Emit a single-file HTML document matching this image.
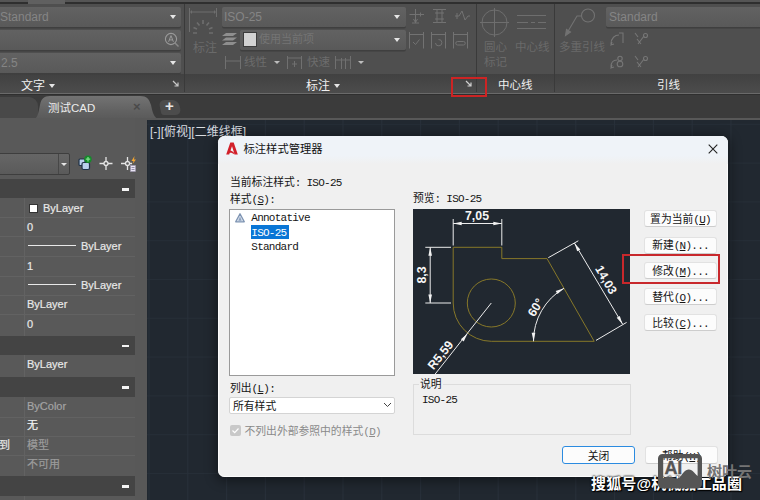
<!DOCTYPE html>
<html lang="zh-CN">
<head>
<meta charset="utf-8">
<title>标注样式管理器</title>
<style>
*{box-sizing:border-box;margin:0;padding:0}
html,body{width:760px;height:500px;overflow:hidden;background:#212830}
body{position:relative;font-family:"Liberation Sans","Noto Sans CJK SC",sans-serif;font-size:11px;color:#ddd}
.a{position:absolute}
.t{position:absolute;white-space:nowrap;line-height:1}
/* ribbon */
#ribbon{left:0;top:0;width:760px;height:96px;background:#4f4f4f}
.combo{background:linear-gradient(#626262,#595959);border-radius:2px;height:20px;box-shadow:0 1.5px 0 #3f3f3f}
.dis{color:#858585}
.wt{color:#f0f0f0}
.vsep{width:1px;background:#3a3a3a;top:4px;height:88px}
.arr{width:0;height:0;border-left:3.5px solid transparent;border-right:3.5px solid transparent;border-top:4px solid #e6e6e6}
/* left palette */
#pal{left:0;top:118px;width:147px;height:382px;background:#595959}
.sec{left:0;width:135px;height:19px;background:#444}
.row{left:0;width:135px;height:1px;background:#626262}
.val{color:#e8e8e8;font-size:11px;-webkit-text-stroke:0.2px currentColor}
/* dialog */
#dlg{left:218px;top:136px;width:510.3px;height:340.8px;background:#f0f0f0;border-radius:6.5px;box-shadow:inset 0 0 0 1px rgba(255,255,255,.8),0 2px 12px 2px rgba(0,0,0,.42);color:#111}
.s{font-family:"Liberation Mono","Noto Sans CJK SC",monospace;font-size:10.8px;color:#151515;font-weight:400}
.m{font-family:"Liberation Mono",monospace;font-size:11px;letter-spacing:-0.75px;font-weight:400}
u{text-decoration-thickness:1px;text-underline-offset:1px}
.btn{background:#fcfcfc;border:1px solid #e2e2e2;border-bottom-color:#cdcdcd;border-radius:3px;height:17px;width:73px;text-align:center}
</style>
</head>
<body>
<div id="ribbon" class="a">
<div class="a" style="left:0;top:0;width:760px;height:2px;background:#555"></div><div class="a" style="left:0;top:2px;width:760px;height:1.5px;background:#2f2f2f"></div><div class="a" style="left:28px;top:0;width:37px;height:4px;background:#606060"></div>
<div class="a" style="left:0;top:74px;width:760px;height:19px;background:linear-gradient(#414141,#4c4c4c)"></div>
<div class="a" style="left:0;top:92.5px;width:760px;height:1px;background:#6a6a6a"></div><div class="a" style="left:0;top:93.5px;width:760px;height:2.5px;background:#2f2f2f"></div>
<!-- text panel -->
<div class="a combo" style="left:-3px;top:7px;width:184px"></div>
<div class="a combo" style="left:-3px;top:30px;width:184px"></div>
<div class="a combo" style="left:-3px;top:53px;width:184px"></div>
<div class="t dis" style="left:0;top:11px;font-size:12px">Standard</div>
<div class="t dis" style="left:1px;top:57px;font-size:12px">2.5</div>
<div class="a arr" style="left:170px;top:15px"></div>
<div class="a arr" style="left:170px;top:61px"></div>
<svg class="a" style="left:163px;top:31px" width="18" height="18" viewBox="0 0 18 18"><circle cx="8" cy="8" r="5.6" fill="none" stroke="#9a9a9a" stroke-width="1.1"/><path d="M5.6 10.8 L8 4.6 L10.4 10.8 M6.4 8.9 H9.6" fill="none" stroke="#9a9a9a" stroke-width="1"/><path d="M12 12 L15.5 15.5" stroke="#8a8a8a" stroke-width="1.4"/></svg>
<div class="t wt" style="left:21px;top:80px;font-size:12px">文字</div>
<div class="a arr" style="left:49px;top:84px"></div>
<svg class="a" style="left:172px;top:80px" width="8" height="8" viewBox="0 0 8 8"><path d="M1 1 L6 6 M6 2.5 V6 H2.5" fill="none" stroke="#c8c8c8" stroke-width="1.2"/></svg>
<div class="a vsep" style="left:184px"></div>
<!-- dimension panel -->
<svg class="a" style="left:188px;top:6px" width="30" height="30" viewBox="0 0 30 30"><g fill="none" stroke="#6e6e6e" stroke-width="1"><path d="M1.5 2 V26 M28.500 2 V11 M1.500 6 H28.500 M3.500 4.500 V7.500 M26.500 4.500 V7.500"/><path d="M15 14 V18 M9 16.500 L11.500 19.500 M21 16.500 L18.500 19.500 M5.500 21.500 L9 23 M24.500 21.500 L21 23 M5 27 H9 M25 27 H21" stroke-width="1.6"/></g></svg>
<div class="t" style="left:193px;top:42px;font-size:12px;color:#6a6a6a">标注</div>
<div class="a combo" style="left:222px;top:7px;width:184px"></div>
<div class="t dis" style="left:224px;top:11px;font-size:12px">ISO-25</div>
<div class="a arr" style="left:394px;top:15px"></div>
<svg class="a" style="left:222px;top:32px" width="16" height="15" viewBox="0 0 16 15"><g fill="#8e8e8e"><path d="M4 1 H15 L11 4 H0 Z"/><path d="M4 5.500 H15 L11 8.500 H0 Z"/><path d="M4 10 H15 L11 13 H0 Z"/></g></svg>
<div class="a combo" style="left:240px;top:30px;width:166px"></div>
<div class="a" style="left:243px;top:32px;width:14px;height:15px;background:#d2d2d2;border:1px solid #3c3c3c"></div>
<div class="t dis" style="left:259px;top:34px;font-size:11px;color:#747474">使用当前项</div>
<div class="a arr" style="left:394px;top:38px"></div>
<svg class="a" style="left:224px;top:55px" width="18" height="15" viewBox="0 0 18 15"><path d="M1.500 1 V14 M16.500 1 V14 M1.500 6 H16.500" fill="none" stroke="#707070" stroke-width="1"/></svg>
<div class="t" style="left:244px;top:57px;font-size:11.5px;color:#6c6c6c">线性</div>
<div class="a arr" style="left:274px;top:61px;border-width:3px 3px 0 3px;border-top-color:#bdbdbd"></div>
<svg class="a" style="left:286px;top:55px" width="17" height="15" viewBox="0 0 17 15"><path d="M1.500 1 V14 M15.500 1 V14 M1.500 3 H15.500 M8.500 6 V12 M6 9 H11" fill="none" stroke="#707070" stroke-width="1"/></svg>
<div class="t" style="left:307px;top:57px;font-size:11.5px;color:#6c6c6c">快速</div>
<svg class="a" style="left:334px;top:55px" width="18" height="15" viewBox="0 0 18 15"><path d="M1.500 1 V14 M7.500 3 V14 M11.500 3 V14 M16.500 1 V14 M1.500 5 H16.500" fill="none" stroke="#707070" stroke-width="1"/></svg>
<div class="a arr" style="left:358px;top:61px;border-width:3px 3px 0 3px;border-top-color:#bdbdbd"></div>
<div class="t wt" style="left:306px;top:80px;font-size:12px">标注</div>
<div class="a arr" style="left:334px;top:84px"></div>
<!-- small dim icons -->
<svg class="a" style="left:409px;top:7px" width="62" height="42" viewBox="0 0 62 42"><g fill="none" stroke="#727272" stroke-width="1">
<path d="M3 16 H10 M6.500 2 V16 M4.500 12 L6.500 15.500 L8.500 12 M0.500 7.500 H15 M11.500 5.500 V9.500"/>
<path d="M24 2.500 H37 M24 15.500 H37 M28 2.500 V15.500 M33 2.500 V15.500 M26 6 H35 M26 12 H35"/>
<path d="M46 9 H50 L53 4 L56 13 L59 9 H61 M48 6 V12"/>
<path d="M0.500 25 V41.500 M14.500 25 V41.500 M0.500 27.500 H14.500 M4 35 L6.500 37.500 L10.500 32.500"/>
<path d="M22.500 25 V41.500 M36.500 25 V41.500 M22.500 27.500 H36.500 M26.500 36 A3.200 3.200 0 1 0 29.500 32.500"/>
<path d="M44.500 25 V41.500 M58.500 25 V41.500 M44.500 27.500 H58.500 M48.500 34.500 H54.500 A1.700 1.700 0 0 1 54.500 38 H48.500 A1.700 1.700 0 0 1 48.500 34.500"/>
</g></svg>
<div class="a" style="left:450.5px;top:76.5px;width:36.5px;height:20.5px;border:2px solid #cc2424;z-index:5"></div>
<svg class="a" style="left:465px;top:80px" width="8" height="8" viewBox="0 0 8 8"><path d="M1 1 L6 6 M6 2.500 V6 H2.500" fill="none" stroke="#d0d0d0" stroke-width="1.2"/></svg>
<div class="a vsep" style="left:476px"></div>
<!-- centerline panel -->
<svg class="a" style="left:480px;top:7px" width="70" height="32" viewBox="0 0 70 32"><g fill="none" stroke="#6e6e6e" stroke-width="1"><circle cx="14.500" cy="15.500" r="12.500"/><path d="M14.500 1 V30 M0 15.500 H29"/><path d="M37 8.500 H66 M37 15.500 H48 M51 15.500 H55 M58 15.500 H66 M37 21.500 H66"/></g></svg>
<div class="t" style="left:484px;top:42px;font-size:11.500px;color:#6a6a6a">圆心</div>
<div class="t" style="left:484px;top:57px;font-size:11.500px;color:#6a6a6a">标记</div>
<div class="t" style="left:515px;top:42px;font-size:11.500px;color:#6a6a6a">中心线</div>
<div class="t wt" style="left:498px;top:80px;font-size:11.500px">中心线</div>
<div class="a vsep" style="left:554px"></div>
<!-- leader panel -->
<svg class="a" style="left:562px;top:6px" width="36" height="32" viewBox="0 0 36 32"><g fill="none" stroke="#727272" stroke-width="1.100"><circle cx="26" cy="9.500" r="6.500"/><path d="M19.500 10 H15 L5 27"/><path d="M3.500 29.500 L4.500 23.500 L8.500 26 Z" fill="#727272"/></g></svg>
<div class="t" style="left:559px;top:42px;font-size:11.500px;color:#6a6a6a">多重引线</div>
<div class="a combo" style="left:606px;top:7px;width:160px"></div>
<div class="t dis" style="left:609px;top:11px;font-size:12px">Standard</div>
<svg class="a" style="left:608px;top:30px" width="42" height="42" viewBox="0 0 42 42"><g fill="none" stroke="#767676" stroke-width="1.100">
<path d="M3 14 C3 8 7 5 11 5 M11 3 H15 V13 M4 12 L3 15 L6 14"/>
<path d="M27 3 L30 7 M30 14 L36 6 M29 9 L33 14"/><circle cx="37.500" cy="5.500" r="2"/>
<path d="M3 37 C3 32 6 30 9 30 M4 35 L3 38 L6 37"/><circle cx="12" cy="28.500" r="2.200"/><circle cx="12" cy="34" r="2.800"/>
<path d="M27 26 L30 30 M30 37 L36 29 M29 32 L33 37"/><circle cx="37.500" cy="28.500" r="2"/>
</g></svg>
<div class="t wt" style="left:657px;top:80px;font-size:11.500px">引线</div>

</div>
<div id="tabs" class="a" style="left:0;top:95px;width:760px;height:25px;background:#3b3b3b">
<div class="a" style="left:-10px;top:2px;width:48px;height:22px;background:#494949;border-radius:0 9px 0 0"></div>
<svg class="a" style="left:30px;top:1px" width="136" height="24" viewBox="0 0 136 24"><defs><linearGradient id="tg" x1="0" y1="0" x2="0" y2="1"><stop offset="0" stop-color="#737373"/><stop offset="0.6" stop-color="#626262"/><stop offset="1" stop-color="#595959"/></linearGradient></defs><path d="M0 24 C8 24 8 18 10 9 C11 3 14 0 20 0 H110 C117 0 119 3 121 9 C123 18 124 24 134 24 Z" fill="url(#tg)"/></svg>
<div class="t" style="left:48px;top:7.5px;font-size:11.5px;color:#ececec">测试CAD</div>
<div class="t" style="left:133px;top:4.5px;font-size:13px;color:#4a4a4a;font-weight:bold">×</div>
<div class="a" style="left:160px;top:5px;width:20px;height:15px;background:#4c4c4c;border-radius:6px 6px 6px 2px;transform:skewX(12deg)"></div>
<div class="t" style="left:165px;top:3px;font-size:15px;color:#e8e8e8;font-weight:bold">+</div>
<div class="a" style="left:0;top:23px;width:760px;height:2px;background:#585858"></div>
</div>
<div id="pal" class="a">
<div class="a" style="left:24px;top:80px;width:1px;height:302px;background:#626262"></div>
<div class="a" style="left:135px;top:0;width:13px;height:382px;background:#585858"></div>
<div class="a" style="left:-2px;top:35px;width:72px;height:22px;background:linear-gradient(#666,#5a5a5a);border:1px solid #3e3e3e;border-radius:2px"></div>
<div class="a" style="left:58px;top:36px;width:1px;height:20px;background:#474747"></div>
<div class="a arr" style="left:61px;top:45px;border-width:3px 3px 0 3px"></div>
<svg class="a" style="left:76px;top:34px" width="64" height="22" viewBox="0 0 64 22">
<rect x="3" y="7" width="6" height="6.500" rx="1" fill="#b9d0ec" stroke="#1f3147" stroke-width="1.200"/>
<rect x="6" y="10.500" width="7.500" height="7" rx="1.500" fill="#b9d0ec" stroke="#1f3147" stroke-width="1.200"/>
<circle cx="12" cy="7.200" r="3.700" fill="#148a2a"/><path d="M12 5 V9.400 M9.800 7.200 H14.200" stroke="#7ee08a" stroke-width="1.300"/>
<g stroke="#e4e4e4" stroke-width="1.300" fill="none"><path d="M30 5 V9 M30 14 V18 M23.500 11.500 H28 M32 11.500 H36.500"/><circle cx="30" cy="11.500" r="2"/>
<path d="M51.500 5 V9 M51.500 14 V18 M45 11.500 H49.500 M53.500 11.500 H56"/><circle cx="51.500" cy="11.500" r="2"/></g>
<path d="M58.500 4 L55.500 9 H57.500 L56.500 12 L60 7.500 H58 Z" fill="#f2a531"/>
<rect x="54.500" y="13.500" width="5" height="6" fill="#e9e4f4" stroke="#9d97b0" stroke-width="0.600"/><path d="M55.500 15.500 H58.500 M55.500 17.500 H58.500" stroke="#6d6786" stroke-width="0.700"/>
</svg>
<div class="a sec" style="top:61px;height:19px"></div><div class="a" style="left:122px;top:70px;width:6.5px;height:2.6px;background:#f4f4f4"></div>
<div class="a row" style="top:99px"></div>
<div class="a row" style="top:118px"></div>
<div class="a row" style="top:138px"></div>
<div class="a row" style="top:157.5px"></div>
<div class="a row" style="top:176.5px"></div>
<div class="a row" style="top:196px"></div>
<div class="a sec" style="top:217.5px;height:19px"></div><div class="a" style="left:122px;top:226.5px;width:6.5px;height:2.6px;background:#f4f4f4"></div>
<div class="a sec" style="top:259px;height:20px"></div><div class="a" style="left:122px;top:268px;width:6.5px;height:2.6px;background:#f4f4f4"></div>
<div class="a row" style="top:298.5px"></div>
<div class="a row" style="top:317.5px"></div>
<div class="a row" style="top:336.5px"></div>
<div class="a sec" style="top:358px;height:20px"></div><div class="a" style="left:122px;top:367px;width:6.5px;height:2.6px;background:#f4f4f4"></div>
<div class="a" style="left:29px;top:86px;width:9px;height:9px;background:#fff;border:1px solid #333"></div>
<div class="t val" style="left:43px;top:84.5px;">ByLayer</div>
<div class="t val" style="left:27px;top:103.5px;">0</div>
<div class="a" style="left:28px;top:127px;width:48px;height:1px;background:#e8e8e8"></div>
<div class="t val" style="left:81px;top:122.5px;">ByLayer</div>
<div class="t val" style="left:27px;top:142.5px;">1</div>
<div class="a" style="left:28px;top:166px;width:48px;height:1px;background:#e8e8e8"></div>
<div class="t val" style="left:81px;top:161.5px;">ByLayer</div>
<div class="t val" style="left:27px;top:180.5px;">ByLayer</div>
<div class="t val" style="left:27px;top:200.5px;">0</div>
<div class="t val" style="left:27px;top:240.5px;">ByLayer</div>
<div class="t val" style="left:27px;top:282.5px;color:#a4a4a4">ByColor</div>
<div class="t val" style="left:27px;top:301.5px;color:#f4f4f4">无</div>
<div class="t val" style="left:27px;top:321.5px;color:#9c9c9c">模型</div>
<div class="t val" style="left:27px;top:340.5px;color:#9c9c9c">不可用</div>
<div class="t val" style="left:-1px;top:321.5px;color:#e8e8e8">到</div>
</div>
<div id="draw" class="a" style="left:147px;top:120px;width:613px;height:380px;background-color:#212830;background-image:linear-gradient(90deg,#28303a 1px,transparent 1px),linear-gradient(180deg,#262e37 1px,transparent 1px);background-size:38.8px 38.8px;background-position:1.5px 3.8px">
<div class="t" style="left:3px;top:6px;font-size:12px;color:#d8dce0">[-][俯视][二维线框]</div>
</div>
<div id="dlg" class="a">
<div class="a" style="left:0;top:0;width:510px;height:28px;background:linear-gradient(#eff3f8 70%,#f0f0f0);border-radius:7px 7px 0 0"></div>
<svg class="a" style="left:8px;top:6px" width="12" height="13" viewBox="0 0 12 13"><path d="M4.300 0.500 H7.700 L11.800 12.500 H8.600 L6 4.200 L4.500 8.600 C5.600 8.900 6.800 9.500 7.800 10.500 L8.400 12.500 C7 11.200 5.200 10.700 3.700 10.900 L3.200 12.500 H0.200 Z" fill="#d2202b"/></svg>
<div class="t " style="left:25.5px;top:8.3px;font-size:11.3px;color:#111;font-family:'Liberation Sans','Noto Sans CJK SC',sans-serif">标注样式管理器</div>
<svg class="a" style="left:490px;top:8px" width="10" height="10" viewBox="0 0 10 10"><path d="M0.700 0.700 L9.300 9.300 M9.300 0.700 L0.700 9.300" stroke="#222" stroke-width="1.100" fill="none"/></svg>
<div class="t s" style="left:12px;top:41.5px;">当前标注样式<span class="m">: ISO-25</span></div>
<div class="t s" style="left:12px;top:58.7px;">样式<span class="m">(<u>S</u>):</span></div>
<div class="a" style="left:11px;top:73px;width:166px;height:167px;background:#fff;border:1px solid #9a9a9a"></div>
<svg class="a" style="left:17px;top:77px" width="10" height="9.500" viewBox="0 0 10 9.500"><path d="M5 0.800 L9.300 8.800 H0.700 Z" fill="#d5deea" stroke="#7d93b2" stroke-width="1.300" stroke-linejoin="round"/><path d="M5 3.500 L6.600 7.800 H3.400 Z" fill="#8da2bf"/></svg>
<div class="t s" style="left:33.3px;top:77px;"><span class="m">Annotative</span></div>
<div class="a" style="left:33px;top:89.2px;width:37.5px;height:13.800px;background:#0a76d6"></div>
<div class="t s" style="left:33.3px;top:91.5px;color:#fff"><span class="m">ISO-25</span></div>
<div class="t s" style="left:33.3px;top:106.2px;"><span class="m">Standard</span></div>
<div class="t s" style="left:12px;top:248px;">列出<span class="m">(<u>L</u>):</span></div>
<div class="a" style="left:11px;top:261px;width:166px;height:17px;background:#fff;border:1px solid #d4d4d4;border-radius:2px"></div>
<div class="t s" style="left:15px;top:265.5px;">所有样式</div>
<svg class="a" style="left:165px;top:266px" width="9" height="6" viewBox="0 0 9 6"><path d="M1 1 L4.500 4.500 L8 1" stroke="#444" stroke-width="1" fill="none"/></svg>
<div class="a" style="left:12px;top:289px;width:11px;height:11px;background:#c9c9c9;border-radius:2px"></div>
<svg class="a" style="left:12px;top:289px" width="11" height="11" viewBox="0 0 11 11"><path d="M2.500 5.500 L4.700 7.700 L8.500 3.500" stroke="#fff" stroke-width="1.200" fill="none"/></svg>
<div class="t s" style="left:26.5px;top:290.5px;color:#8a8a8a">不列出外部参照中的样式<span class="m">(<u>D</u>)</span></div>
<div class="t s" style="left:195px;top:58px;">预览<span class="m">: ISO-25</span></div>
<svg id="pv" class="a" style="left:195px;top:73px;background:#212830" width="217" height="165" viewBox="0 0 217 165">
<g fill="none" stroke="#877829" stroke-width="1"><path d="M40.2 38.3 L88.8 38.3 L88.8 49.6 L134 49.6 L181.2 132.3 L78.3 132.3 A38.2 38.2 0 0 1 40.2 94 Z"/><circle cx="78.3" cy="94" r="24"/></g>
<path d="M40.2 10 L40.2 36.5 M88.8 10 L88.8 36.5 M40.2 14.5 L88.8 14.5 M12.3 38.3 L38 38.3 M12.3 94 L38 94 M17.2 38.3 L17.2 94 M135.3 48.7 L165.3 31.8 M183 131.4 L213.6 113.4 M161.4 34 L209.6 115.2 M151 79.3 A60.8 60.8 0 0 0 120.5 132.3 M78.3 94 L22.2 165" fill="none" stroke="#ececec" stroke-width="1"/>
<path d="M40.2 14.5 L48.7 16.3 L48.7 12.7 Z" fill="#f2f2f2" stroke="none"/>
<path d="M88.8 14.5 L80.3 12.7 L80.3 16.3 Z" fill="#f2f2f2" stroke="none"/>
<path d="M17.2 38.3 L15.4 46.8 L19 46.8 Z" fill="#f2f2f2" stroke="none"/>
<path d="M17.2 94 L19 85.5 L15.4 85.5 Z" fill="#f2f2f2" stroke="none"/>
<path d="M161.4 34 L164.2 42.2 L167.3 40.4 Z" fill="#f2f2f2" stroke="none"/>
<path d="M209.6 115.2 L206.8 107 L203.7 108.8 Z" fill="#f2f2f2" stroke="none"/>
<path d="M151 79.3 L142.7 81.9 L144.5 85.1 Z" fill="#f2f2f2" stroke="none"/>
<path d="M120.5 132.3 L122.3 123.8 L118.7 123.8 Z" fill="#f2f2f2" stroke="none"/>
<path d="M54.6 124.6 L47.9 130.2 L50.7 132.4 Z" fill="#f2f2f2" stroke="none"/>
<text x="0" y="0" transform="translate(64,7) rotate(0)" text-anchor="middle" dominant-baseline="central" font-family="Liberation Sans,sans-serif" font-weight="bold" font-size="12.3" fill="#f6f6f6">7,05</text>
<text x="0" y="0" transform="translate(9.2,66) rotate(-90)" text-anchor="middle" dominant-baseline="central" font-family="Liberation Sans,sans-serif" font-weight="bold" font-size="12.3" fill="#f6f6f6">8,3</text>
<text x="0" y="0" transform="translate(192.9,70.9) rotate(59.8)" text-anchor="middle" dominant-baseline="central" font-family="Liberation Sans,sans-serif" font-weight="bold" font-size="12.3" fill="#f6f6f6">14,03</text>
<text x="0" y="0" transform="translate(122.7,98.5) rotate(-58)" text-anchor="middle" dominant-baseline="central" font-family="Liberation Sans,sans-serif" font-weight="bold" font-size="12.3" fill="#f6f6f6">60°</text>
<text x="0" y="0" transform="translate(27.6,146.2) rotate(-51.7)" text-anchor="middle" dominant-baseline="central" font-family="Liberation Sans,sans-serif" font-weight="bold" font-size="12.3" fill="#f6f6f6">R5,59</text>
</svg>
<div class="a" style="left:195px;top:248px;width:218px;height:51px;border:1px solid #dcdcdc"></div>
<div class="t s" style="left:201px;top:244px;background:#f0f0f0;padding:0 1px">说明</div>
<div class="t s" style="left:204px;top:259px;"><span class="m">ISO-25</span></div>
<div class="a btn s" style="left:426px;top:73.5px;width:73px;height:17px;line-height:16.5px;padding-top:1px">置为当前<span class="m">(<u>U</u>)</span></div>
<div class="a btn s" style="left:426px;top:100.5px;width:73px;height:17px;line-height:16.5px;">新建<span class="m">(<u>N</u>)...</span></div>
<div class="a btn s" style="left:426px;top:125.5px;width:73px;height:17px;line-height:16.5px;padding-top:1px">修改<span class="m">(<u>M</u>)...</span></div>
<div class="a btn s" style="left:426px;top:152px;width:73px;height:17px;line-height:16.5px;padding-top:1px">替代<span class="m">(<u>O</u>)...</span></div>
<div class="a btn s" style="left:426px;top:178px;width:73px;height:17px;line-height:16.5px;padding-top:1px">比较<span class="m">(<u>C</u>)...</span></div>
<div class="a" style="left:404px;top:118px;width:97.5px;height:30px;border:2px solid #c8282c"></div>
<div class="a btn s" style="left:344px;top:310px;width:73px;height:18px;line-height:17px;padding-top:1.5px;border-color:#2b8be0">关闭</div>
<div class="a btn s" style="left:427px;top:310px;width:73px;height:18px;line-height:17px;padding-top:1.5px">帮助<span class="m">(<u>H</u>)</span></div>
</div>
<div id="wm" class="a" style="left:0;top:0;width:760px;height:500px;pointer-events:none">
<div class="t" style="left:591px;top:475.5px;font-size:15px;font-weight:bold;color:#fff;letter-spacing:0.15px;font-family:'Liberation Sans','Noto Sans CJK SC',sans-serif;text-shadow:0 0 2px #000,0 0 2px #000,1px 1px 1px #000">搜狐号@机械加工品圈</div>
<svg class="a" style="left:658px;top:454px" width="45" height="35" viewBox="0 0 45 35"><path fill-rule="evenodd" fill="#555" d="M4.500 0 H39.500 A4.500 4.500 0 0 1 44 4.500 V30 A4.500 4.500 0 0 1 39.500 34.500 H4.500 A4.500 4.500 0 0 1 0 30 V4.500 A4.500 4.500 0 0 1 4.500 0 Z M5.200 4.300 V24 C8 22.500 10 22 12.500 22.800 C15 23.600 17 24.500 19.500 24.500 C23 24.500 25 16 30.500 15.600 C35 15.400 36.500 20 39.600 22 V4.300 Z"/></svg>
<div class="t" style="left:664.5px;top:458.5px;font-size:18px;font-weight:bold;color:#555;letter-spacing:-0.2px;-webkit-text-stroke:0.3px #555">AI</div>
<div class="t" style="left:707px;top:464px;font-size:15px;font-weight:bold;color:#747474;font-family:'Liberation Sans','Noto Sans CJK SC',sans-serif">树叶云</div>
</div>
</body>
</html>
